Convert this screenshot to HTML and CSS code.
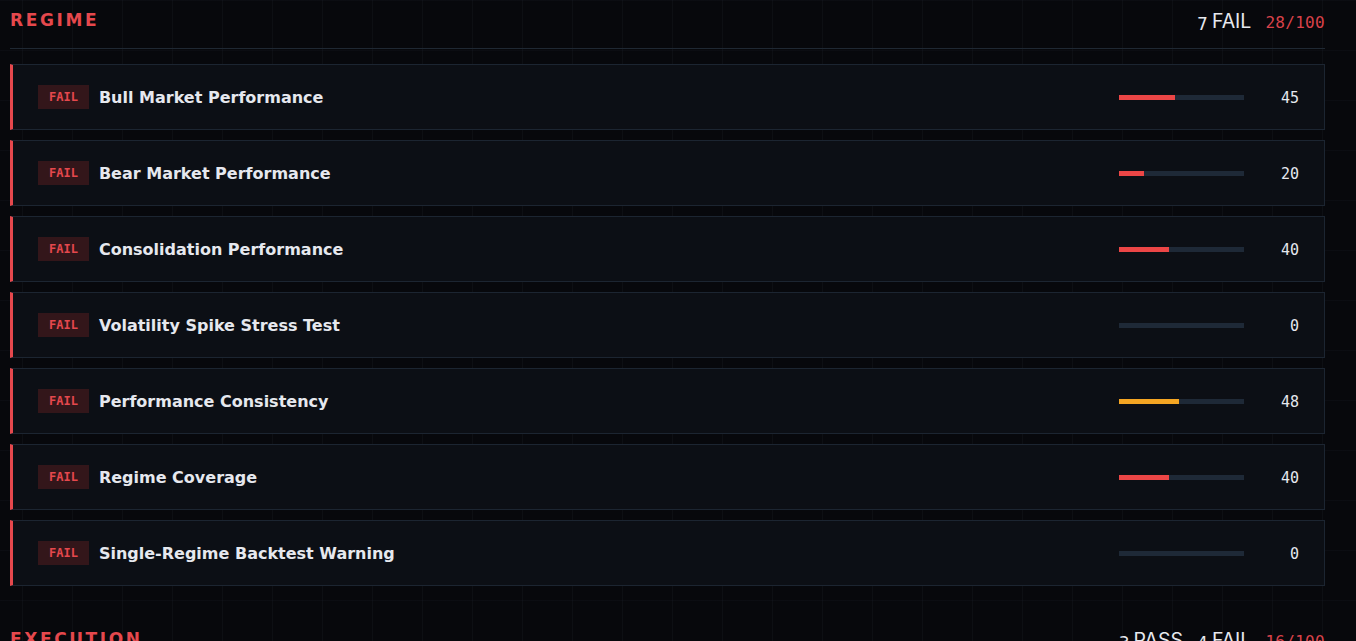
FILE: index.html
```html
<!DOCTYPE html>
<html>
<head>
<meta charset="utf-8">
<link rel="stylesheet" href="styles.css">
</head>
<body>
<div class="page">
  <section class="section">
    <header class="sec-head">
      <h2 class="sec-title">REGIME</h2>
      <div class="sec-stats">
        <span class="stat"><span class="num">7</span>FAIL</span>
        <span class="score">28/100</span>
      </div>
    </header>
    <div class="rows">
      <div class="row"><span class="badge">FAIL</span><span class="name">Bull Market Performance</span><div class="bar"><div class="fill red" style="width:45%"></div></div><span class="val">45</span></div>
      <div class="row"><span class="badge">FAIL</span><span class="name">Bear Market Performance</span><div class="bar"><div class="fill red" style="width:20%"></div></div><span class="val">20</span></div>
      <div class="row"><span class="badge">FAIL</span><span class="name">Consolidation Performance</span><div class="bar"><div class="fill red" style="width:40%"></div></div><span class="val">40</span></div>
      <div class="row"><span class="badge">FAIL</span><span class="name">Volatility Spike Stress Test</span><div class="bar"><div class="fill red" style="width:0%"></div></div><span class="val">0</span></div>
      <div class="row"><span class="badge">FAIL</span><span class="name">Performance Consistency</span><div class="bar"><div class="fill amber" style="width:48%"></div></div><span class="val">48</span></div>
      <div class="row"><span class="badge">FAIL</span><span class="name">Regime Coverage</span><div class="bar"><div class="fill red" style="width:40%"></div></div><span class="val">40</span></div>
      <div class="row"><span class="badge">FAIL</span><span class="name">Single-Regime Backtest Warning</span><div class="bar"><div class="fill red" style="width:0%"></div></div><span class="val">0</span></div>
    </div>
  </section>
  <section class="section">
    <header class="sec-head">
      <h2 class="sec-title">EXECUTION</h2>
      <div class="sec-stats">
        <span class="stat"><span class="num">3</span>PASS</span>
        <span class="stat"><span class="num">4</span>FAIL</span>
        <span class="score">16/100</span>
      </div>
    </header>
  </section>
</div>
</body>
</html>
```
FILE: styles.css
```css
html, body {
  margin: 0;
  padding: 0;
  height: 100%;
  overflow: hidden;
}
body {
  background-color: #07080c;
  background-image:
    linear-gradient(to right, rgba(120,140,170,0.05) 1px, transparent 1px),
    linear-gradient(to bottom, rgba(120,140,170,0.035) 1px, transparent 1px);
  background-size: 50px 50px;
  background-position: 22px 0;
  color: #e6e8ee;
  font-family: "DejaVu Sans", sans-serif;
}
.page {
  padding: 0 31px 0 10px;
}
.section + .section {
  margin-top: 33px;
}
.sec-head {
  display: flex;
  justify-content: space-between;
  align-items: flex-start;
  height: 49px;
  box-sizing: border-box;
  border-bottom: 1px solid #1f2833;
  padding-top: 12px;
}
.sec-title {
  margin: 0;
  font-size: 17px;
  line-height: 17px;
  font-weight: 700;
  letter-spacing: 2.6px;
  color: #e5484d;
}
.sec-stats {
  display: flex;
  align-items: baseline;
  gap: 14px;
}
.stat {
  font-family: Inter, "Liberation Sans", sans-serif;
  font-size: 19.5px;
  line-height: 18px;
  color: #e6e8ee;
}
.num {
  font-family: "DejaVu Sans", sans-serif;
  font-size: 17px;
  position: relative;
  top: 2px;
  margin-right: 4px;
}
.score {
  font-family: "DejaVu Sans Mono", monospace;
  font-size: 16px;
  letter-spacing: 0.3px;
  color: #d9424a;
}
.rows {
  display: flex;
  flex-direction: column;
  gap: 10px;
  margin-top: 15px;
}
.row {
  display: flex;
  align-items: center;
  height: 66px;
  box-sizing: border-box;
  background: #0c0f15;
  border: 1px solid #1c2531;
  border-left: 3px solid #e5484d;
  padding: 0 25px 0 25px;
}
.badge {
  font-family: "DejaVu Sans Mono", monospace;
  font-size: 12px;
  font-weight: 700;
  color: #e5484d;
  background: #33161a;
  padding: 0 11px;
  height: 24px;
  line-height: 24px;
}
.name {
  margin-left: 10px;
  font-size: 16px;
  font-weight: 600;
  color: #e6e8ee;
  flex: 1;
}
.bar {
  width: 125px;
  height: 5px;
  background: #1e2937;
}
.fill {
  height: 100%;
}
.fill.red { background: #ec4646; }
.fill.amber { background: #f5a623; }
.val {
  width: 40px;
  margin-left: 15px;
  text-align: right;
  font-family: "DejaVu Sans Mono", monospace;
  font-size: 15px;
  line-height: 20px;
  padding-top: 1px;
  color: #e6e8ee;
}
```
